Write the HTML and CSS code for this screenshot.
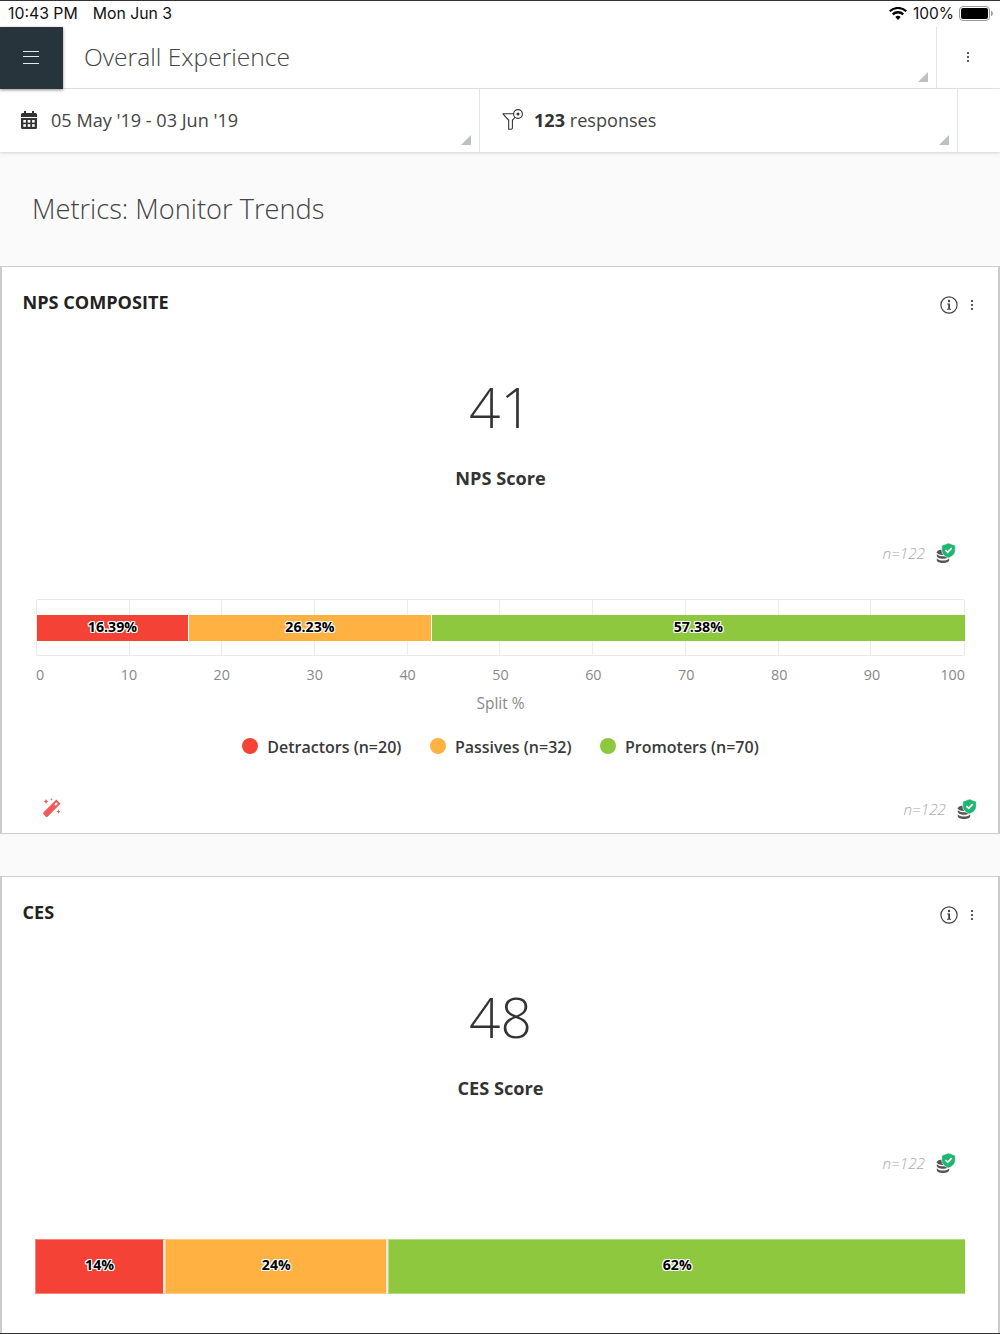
FILE: index.html
```html
<!DOCTYPE html>
<html lang="en">
<head>
<meta charset="utf-8">
<title>Metrics: Monitor Trends</title>
<link rel="stylesheet" href="styles.css">
</head>
<body>
<svg class="defs" width="0" height="0" aria-hidden="true">
  <symbol id="dots" viewBox="0 0 4 12"><circle cx="2" cy="2" r="1.1"/><circle cx="2" cy="6" r="1.1"/><circle cx="2" cy="10" r="1.1"/></symbol>
  <symbol id="info" viewBox="0 0 18 18"><circle cx="9" cy="9" r="8.1" fill="none" stroke="#444" stroke-width="1.2"/><circle cx="9" cy="5" r="1.2" fill="#444"/><path d="M7.2 7.6H10v5.2h1.1v1H7v-1h1.2V8.6h-1z" fill="#444"/></symbol>
  <symbol id="db" viewBox="0 0 20 20">
    <g fill="#555"><ellipse cx="7" cy="9.3" rx="6.2" ry="2.8"/><path d="M.8 11v2c0 1.5 2.8 2.7 6.2 2.7s6.2-1.2 6.2-2.7v-2c-1 1.500-3.400 2.300-6.200 2.300S1.800 12.500.8 11z"/><path d="M.8 15.200v2c0 1.500 2.800 2.700 6.200 2.700s6.200-1.200 6.200-2.700v-2c-1 1.500-3.400 2.300-6.200 2.300s-5.200-.8-6.200-2.300z"/></g>
    <path d="M12.500 0l6.800 2.400v4.600c0 4-2.800 6.500-6.800 8-4-1.500-6.800-4-6.800-8V2.400z" fill="#1fb573" stroke="#fff" stroke-width=".6"/>
    <path d="M9.400 7l2.300 2.300 4-4.200" fill="none" stroke="#fff" stroke-width="1.700"/>
  </symbol>
</svg>
<div class="frame">
  <div class="status">
    <span class="status-time">10:43 PM</span><span class="status-date">Mon Jun 3</span>
    <span class="status-right">
      <svg class="wifi" viewBox="0 0 18 13"><path d="M9 13L6.300 10.100a3.900 3.900 0 0 1 5.400 0zM4.600 8.300L2.900 6.500a8.800 8.800 0 0 1 12.200 0L13.400 8.300a6.400 6.400 0 0 0-8.800 0zM1.400 5L0 3.500a13 13 0 0 1 18 0L16.600 5a11 11 0 0 0-15.200 0z"/></svg>
      <span>100%</span>
      <svg class="battery" viewBox="0 0 34 15"><rect x=".5" y=".5" width="30" height="14" rx="3.500" fill="none" stroke="#999"/><rect x="2" y="2" width="27" height="11" rx="2"/><path d="M32 5c1.200.300 1.800 1.200 1.800 2.500S33.200 9.700 32 10z" fill="#999"/></svg>
    </span>
  </div>

  <header class="topbar">
    <button class="menu-btn" aria-label="Menu"><span class="bars"></span></button>
    <h1 class="topbar-title">Overall Experience<span class="corner"></span></h1>
    <div class="topbar-more"><svg class="dots-icon"><use href="#dots"/></svg></div>
  </header>

  <div class="filters">
    <div class="filter filter-date">
      <svg class="cal" viewBox="0 0 16 18"><path d="M3 0h2v2h6V0h2v2h1.500A1.500 1.500 0 0 1 16 3.500V6H0V3.500A1.500 1.500 0 0 1 1.500 2H3zM0 7h16v9.500a1.500 1.500 0 0 1-1.500 1.500h-13A1.500 1.500 0 0 1 0 16.500z" fill="#333"/><g fill="#fff"><rect x="2.300" y="9" width="2.600" height="2.600"/><rect x="6.700" y="9" width="2.600" height="2.600"/><rect x="11.100" y="9" width="2.600" height="2.600"/><rect x="2.300" y="13.200" width="2.600" height="2.600"/><rect x="6.700" y="13.200" width="2.600" height="2.600"/><rect x="11.100" y="13.200" width="2.600" height="2.600"/></g></svg>
      <span>05 May '19 - 03 Jun '19</span><span class="corner"></span>
    </div>
    <div class="filter filter-resp">
      <svg class="funnel" viewBox="0 0 22 21"><path d="M.7 4.700h12.600M.7 4.700l6 6.600v9h2.600l1.100-1v-8l2.900-3.300" fill="none" stroke="#333" stroke-width="1.100"/><circle cx="16" cy="5" r="4.400" fill="#fff" stroke="#333" stroke-width="1.100"/><circle cx="16" cy="5" r="1.500" fill="#333"/></svg>
      <span><b>123</b> responses</span><span class="corner"></span>
    </div>
    <div class="filter-end"></div>
  </div>

  <h2 class="page-title">Metrics: Monitor Trends</h2>

  <section class="card">
    <div class="card-head">
      <h3 class="card-title">NPS COMPOSITE</h3>
      <div class="card-tools"><svg class="info-icon"><use href="#info"/></svg><svg class="dots-icon"><use href="#dots"/></svg></div>
    </div>
    <div class="score">41</div>
    <div class="score-label">NPS Score</div>
    <div class="sample"><span class="n">n=122</span><svg class="db-icon"><use href="#db"/></svg></div>
    <div class="plot">
      <i></i><i></i><i></i><i></i><i></i><i></i><i></i><i></i><i></i><i></i>
      <div class="stack stack-thin">
        <div class="seg red" style="width:16.39%">16.39%</div>
        <div class="seg amber" style="width:26.23%">26.23%</div>
        <div class="seg green" style="width:57.38%">57.38%</div>
      </div>
    </div>
    <div class="ticks">
      <span class="tick tick-first"><span>0</span></span><span class="tick"><span>10</span></span><span class="tick"><span>20</span></span><span class="tick"><span>30</span></span><span class="tick"><span>40</span></span><span class="tick"><span>50</span></span><span class="tick"><span>60</span></span><span class="tick"><span>70</span></span><span class="tick"><span>80</span></span><span class="tick"><span>90</span></span><span class="tick tick-last"><span>100</span></span>
    </div>
    <div class="axis-title">Split %</div>
    <div class="legend">
      <span class="legend-item"><i class="dot red"></i>Detractors (n=20)</span>
      <span class="legend-item"><i class="dot amber"></i>Passives (n=32)</span>
      <span class="legend-item"><i class="dot green"></i>Promoters (n=70)</span>
    </div>
    <div class="card-foot">
      <svg class="wand" viewBox="0 0 20 20"><path d="M14.300 1.500l4.200 4.200L5.800 18.400a1.500 1.500 0 0 1-2.100 0l-2.100-2.100a1.500 1.500 0 0 1 0-2.100z" fill="#f05a5a"/><path d="M14.300 4.200l1.500 1.500-2 2-1.500-1.500z" fill="#fff"/><path d="M4 1l.8 1.700L6.500 3.500l-1.700.8L4 6l-.8-1.700L1.500 3.500l1.700-.8zM16.500 11.500l.7 1.400 1.400.7-1.400.7-.7 1.400-.7-1.400-1.400-.7 1.400-.7zM9.500 0l.4 1 1 .4-1 .4-.4 1-.4-1-1-.4 1-.4z" fill="#f05a5a"/></svg>
      <div class="foot-sample"><span class="n">n=122</span><svg class="db-icon"><use href="#db"/></svg></div>
    </div>
  </section>

  <section class="card">
    <div class="card-head">
      <h3 class="card-title">CES</h3>
      <div class="card-tools"><svg class="info-icon"><use href="#info"/></svg><svg class="dots-icon"><use href="#dots"/></svg></div>
    </div>
    <div class="score">48</div>
    <div class="score-label">CES Score</div>
    <div class="sample"><span class="n">n=122</span><svg class="db-icon"><use href="#db"/></svg></div>
    <div class="stack stack-tall">
      <div class="seg red" style="width:14%">14%</div>
      <div class="seg amber" style="width:24%">24%</div>
      <div class="seg green" style="width:62%">62%</div>
    </div>
  </section>
</div>
</body>
</html>
```

FILE: styles.css
```css
* { box-sizing: border-box; }
html, body { margin: 0; padding: 0; }
body { font-family: "Open Sans", "Noto Sans", sans-serif; color: #333; background: #fafafa; }
.defs { display: block; height: 0; }
.frame { width: 1000px; height: 1334px; overflow: hidden; border-top: 1px solid #333; border-bottom: 1px solid #333; background: #fafafa; }

.status { height: 26px; background: #fff; display: flex; align-items: center; padding: 0 7px 1px 8px; font-family: Inter, "Liberation Sans", sans-serif; font-size: 15.800px; color: #111; }
.status-date { margin-left: 15px; }
.status-right { margin-left: auto; display: flex; align-items: center; gap: 5px; font-size: 15.500px; }
.wifi { width: 18px; height: 13px; margin-right: 1px; }
.battery { width: 34px; height: 15px; }

.topbar { height: 62px; display: flex; background: #fff; border-bottom: 1px solid #e6e6e6; }
.menu-btn { width: 63px; height: 62px; padding: 0 1px 2px 0; border: 0; background: #28343c; box-shadow: 0 1px 3px rgba(0,0,0,.45); display: flex; align-items: center; justify-content: center; position: relative; z-index: 1; }
.bars { display: block; width: 16px; height: 13px; border-top: 1.500px solid #e4e8ea; border-bottom: 1.500px solid #e4e8ea; position: relative; }
.bars::after { content: ""; position: absolute; left: 0; right: 0; top: 4.250px; border-top: 1.500px solid #e4e8ea; }
.topbar-title { flex: 1; margin: 0; padding-left: 21px; font-size: 24.600px; font-weight: 300; line-height: 59px; color: #444; position: relative; }
.topbar-more { width: 64px; border-left: 1px solid #e3e3e3; display: flex; align-items: center; justify-content: center; padding: 0 1px 2px 0; }
.dots-icon { width: 4px; height: 12px; fill: #333; }

.filters { height: 63px; display: flex; background: #fff; box-shadow: 0 1px 3px rgba(0,0,0,.16); position: relative; }
.filter { display: flex; align-items: center; position: relative; font-size: 18.100px; line-height: 24px; color: #444; padding-bottom: 2px; }
.filter-date { width: 480px; padding-left: 21px; border-right: 1px solid #e3e3e3; }
.filter-resp { width: 478px; padding-left: 22px; border-right: 1px solid #e3e3e3; }
.filter-end { flex: 1; }
.filter b { font-weight: 700; color: #333; }
.cal { width: 16px; height: 18px; margin-right: 14px; }
.funnel { width: 22px; height: 21px; margin-right: 10px; }
.corner { position: absolute; right: 8px; bottom: 7px; width: 10px; height: 10px; background: #bcc0c3; clip-path: polygon(100% 0, 100% 100%, 0 100%); }
.topbar-title .corner { bottom: 6px; }

.page-title { margin: 0; padding: 37px 0 37px 32px; font-size: 27.200px; font-weight: 300; line-height: 40px; color: #444; }

.card { height: 568px; margin-bottom: 42px; background: #fff; border: 1px solid #ccc; border-left-width: 2px; border-right-width: 2px; padding: 0 33px 0 34px; }
.card-head { display: flex; justify-content: space-between; margin: 0 -33px 0 -13.500px; padding: 23px 24px 0 0; height: 47px; }
.card-title { margin: 0; font-size: 18.100px; font-weight: 700; line-height: 24px; color: #222; }
.card-tools { display: flex; align-items: center; gap: 12px; height: 28px; padding-top: 2px; }
.info-icon { width: 18px; height: 18px; }
.score { margin-top: 58px; font-size: 55px; font-weight: 300; line-height: 70px; text-align: center; color: #333; }
.score-label { margin-top: 24px; font-size: 18.200px; font-weight: 700; line-height: 24px; text-align: center; color: #333; }
.sample { margin-top: 51px; height: 24px; display: flex; justify-content: flex-end; align-items: center; padding-right: 9px; }
.n { font-size: 15.300px; font-style: italic; font-weight: 300; color: #aaa; }
.db-icon { width: 20px; height: 20px; margin-left: 11px; }

.plot { margin-top: 34px; height: 57px; display: grid; grid-template-columns: repeat(10, 1fr); border: 1.500px solid #e9e9ec; border-radius: 2px; position: relative; }
.plot i { border-right: 1.500px solid #ececef; }
.plot i:last-of-type { border-right: 0; }
.stack { display: flex; }
.stack-thin { position: absolute; left: 0; right: 0; top: 15px; height: 26px; }
.stack-thin .seg:last-child { flex: 1; margin-right: -.5px; }
.stack-tall { margin: 64px 0 0 -1px; height: 55px; }
.seg { display: flex; align-items: center; justify-content: center; padding-bottom: 4px; font-size: 14.200px; font-weight: 700; color: #000; border-right: 1px solid #fff; text-shadow: -1px 0 0 #fff, 1px 0 0 #fff, 0 -1px 0 #fff, 0 1px 0 #fff, -1px -1px 0 #fff, 1px 1px 0 #fff, -1px 1px 0 #fff, 1px -1px 0 #fff; }
.seg:last-child { border-right: 0; }
.stack-tall .seg { border: 1px solid rgba(255,255,255,.35); border-right: 2px solid #ffe8d8; }
.stack-tall .seg:last-child { border-right: 0; }
.red { background: #f44336; }
.amber { background: #ffb142; }
.green { background: #8dc83f; }

.ticks { margin-top: 9px; height: 20px; display: flex; justify-content: space-between; font-size: 14.300px; line-height: 20px; color: #888; }
.tick { width: 0; display: flex; justify-content: center; white-space: nowrap; }
.tick-first { justify-content: flex-start; }
.tick-last { justify-content: flex-end; }
.axis-title { margin-top: 8px; font-size: 15.500px; line-height: 20px; text-align: center; color: #888; }
.legend { margin-top: 24px; height: 20px; display: flex; justify-content: center; gap: 28.500px; font-size: 16px; font-weight: 600; line-height: 20px; color: #3a3a3a; }
.legend-item { display: flex; align-items: center; }
.dot { width: 16px; height: 16px; border-radius: 50%; margin-right: 9px; margin-top: -2px; }
.card-foot { margin: 40px -12px 0 6px; height: 24px; display: flex; justify-content: space-between; align-items: center; }
.foot-sample { display: flex; align-items: center; }
.wand { width: 20px; height: 20px; margin-top: -2px; }
```
